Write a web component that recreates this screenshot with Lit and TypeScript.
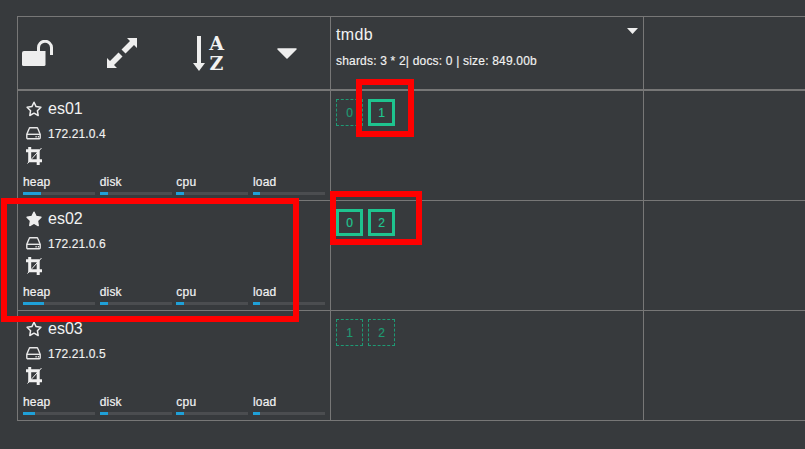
import { LitElement, html, css, svg } from 'lit';
import { customElement } from 'lit/decorators.js';

interface Metric {
  label: string;
  used: number;
}

interface Shard {
  id: number;
  active: boolean;
}

interface NodeInfo {
  name: string;
  ip: string;
  master: boolean;
  metrics: Metric[];
  shards: Shard[];
}

const NODES: NodeInfo[] = [
  {
    name: 'es01', ip: '172.21.0.4', master: false,
    metrics: [{ label: 'heap', used: 25 }, { label: 'disk', used: 11 }, { label: 'cpu', used: 11 }, { label: 'load', used: 10 }],
    shards: [{ id: 0, active: false }, { id: 1, active: true }],
  },
  {
    name: 'es02', ip: '172.21.0.6', master: true,
    metrics: [{ label: 'heap', used: 29 }, { label: 'disk', used: 11 }, { label: 'cpu', used: 11 }, { label: 'load', used: 10 }],
    shards: [{ id: 0, active: true }, { id: 2, active: true }],
  },
  {
    name: 'es03', ip: '172.21.0.5', master: false,
    metrics: [{ label: 'heap', used: 17 }, { label: 'disk', used: 11 }, { label: 'cpu', used: 11 }, { label: 'load', used: 10 }],
    shards: [{ id: 1, active: false }, { id: 2, active: false }],
  },
];

const STAR = 'M8 1.2l2.1 4.4 4.8.7-3.5 3.4.8 4.8L8 12.2l-4.2 2.3.8-4.8L1.1 6.3l4.8-.7z';

const lockIcon = svg`<svg class="ico" width="32" height="26" viewBox="0 0 32 26">
  <path fill="#eee" d="M0 13a2 2 0 0 1 2-2h21.500v13.500a1.500 1.500 0 0 1-1.500 1.500H1.500A1.500 1.500 0 0 1 0 24.500z"/>
  <path fill="none" stroke="#eee" stroke-width="3" d="M16.500 11V8a6.500 6.500 0 0 1 13-.5V15"/>
</svg>`;

const expandIcon = svg`<svg class="ico" width="30" height="30" viewBox="0 0 30 30" fill="#eee">
  <path d="M20 0h10v10l-3-3-8.500 8.500-4-4L23 3z"/>
  <path d="M10 30H0V20l3 3 8.500-8.500 4 4L7 27z"/>
</svg>`;

const caretIcon = svg`<svg class="ico" width="20" height="11" viewBox="0 0 20 11">
  <path fill="#eee" stroke="#eee" stroke-linejoin="round" stroke-width="1.500" d="M1 1h18l-9 9z"/>
</svg>`;

const smallCaret = svg`<svg class="ico" width="11" height="6" viewBox="0 0 11 6">
  <path fill="#eee" d="M0 0h11L5.500 6z"/>
</svg>`;

const diskIcon = svg`<svg class="ico" width="15" height="13" viewBox="0 0 15 13" fill="none" stroke="#e8e8e8" stroke-width="1.400">
  <path d="M.8 7.300 3.200 1.500a1 1 0 0 1 .9-.7h6.800a1 1 0 0 1 .9.7l2.400 5.800v3.500a1 1 0 0 1-1 1H1.800a1 1 0 0 1-1-1z"/>
  <path d="M1 7.300h13"/>
  <path stroke-width="1.500" d="M9.500 9.700h1.200M11.800 9.700H13"/>
</svg>`;

const cropIcon = svg`<svg class="ico" width="16" height="18" viewBox="0 0 16 18" fill="none" stroke="#f0f0f0" stroke-width="3">
  <path d="M3.700 0v13.700H16"/>
  <path d="M0 3.800h12.200V18"/>
  <path stroke-width="1" d="M1.500 16.500 15.500 1"/>
</svg>`;

@customElement('app-root')
export class AppRoot extends LitElement {
  static styles = css`
    :host {
      display: block;
      width: 805px;
      height: 449px;
      position: relative;
      overflow: hidden;
      background: #373a3d;
      color: #f2f2f2;
      font-family: 'Liberation Sans', Arial, sans-serif;
    }

    .cluster {
      display: grid;
      grid-template-columns: 313px 313px 200px;
      grid-template-rows: 74px repeat(3, 110px);
      margin: 16px 0 0 17px;
      border-top: 1px solid #777;
      border-left: 1px solid #777;
      width: 826px;
    }

    .cell {
      border-right: 1px solid #777;
      border-bottom: 1px solid #777;
      box-sizing: border-box;
      min-width: 0;
    }

    .head {
      border-bottom-width: 2px;
    }

    .tools {
      display: flex;
      align-items: center;
      gap: 53px;
      padding-left: 4px;
    }

    .ico {
      display: block;
      flex: none;
    }

    .sort {
      display: flex;
      align-items: center;
      gap: 4px;
      height: 36px;
      margin-left: 3px;
    }

    .sort-letters {
      display: flex;
      flex-direction: column;
      font-family: 'DejaVu Serif', serif;
      font-weight: bold;
      font-size: 19px;
      line-height: 20px;
      text-align: center;
      width: 15px;
    }

    .index {
      position: relative;
      padding: 9px 5px 0;
    }

    .index-name {
      font-size: 16px;
      line-height: 18px;
      letter-spacing: 0.4px;
    }

    .index-stats {
      margin-top: 10px;
      font-size: 12px;
      line-height: 14px;
      letter-spacing: 0.19px;
      -webkit-text-stroke: 0.15px;
    }

    .index-menu {
      position: absolute;
      top: 11px;
      right: 5px;
    }

    .node {
      display: flex;
      flex-direction: column;
      padding: 9px 5px 0;
    }

    .line {
      display: flex;
      align-items: center;
      gap: 6px;
      padding-left: 3px;
    }

    .name-line {
      height: 18px;
      font-size: 16px;
    }

    .ip-line {
      height: 14px;
      margin-top: 8px;
      gap: 7px;
      font-size: 12px;
      letter-spacing: 0.1px;
      -webkit-text-stroke: 0.15px;
    }

    .ip-line span {
      margin-top: 2px;
    }

    .crop-line {
      height: 18px;
      margin-top: 7px;
    }

    .metrics {
      display: grid;
      grid-template-columns: repeat(4, 72px);
      column-gap: 4.670px;
      margin-top: 10px;
    }

    .metric-label {
      font-size: 12px;
      line-height: 14px;
      letter-spacing: 0.2px;
      -webkit-text-stroke: 0.2px;
    }

    .bar {
      height: 3px;
      margin-top: 3px;
      background: #4b4d50;
    }

    .bar-fill {
      height: 100%;
      background: #1fa0d8;
    }

    .shards {
      display: flex;
      gap: 5px;
      padding: 8px 5px 0;
    }

    .shard {
      width: 27px;
      height: 27px;
      box-sizing: border-box;
      display: flex;
      align-items: center;
      justify-content: center;
      font-size: 12px;
      color: #1f9a72;
      border: 1px dashed #1e9a74;
      -webkit-text-stroke: 0.2px;
    }

    .shard.active {
      border: 3px solid #1ec48f;
      color: #20c791;
    }

    .mark {
      position: absolute;
      box-sizing: border-box;
      border: 6px solid #ff0000;
    }

    .mark-shard-1 { left: 356px; top: 79px; width: 58px; height: 58px; }
    .mark-shard-2 { left: 330px; top: 191px; width: 92px; height: 54px; }
    .mark-node { left: 1px; top: 198px; width: 298px; height: 124px; }
  `;

  renderNode(node: NodeInfo) {
    return html`
      <div class="cell node">
        <div class="line name-line">
          <svg class="ico" width="16" height="16" viewBox="0 0 16 16">
            <path d=${STAR} fill=${node.master ? '#eee' : 'none'} stroke="#eee" stroke-width="1.500" stroke-linejoin="round"></path>
          </svg>
          <span>${node.name}</span>
        </div>
        <div class="line ip-line">${diskIcon}<span>${node.ip}</span></div>
        <div class="line crop-line">${cropIcon}</div>
        <div class="metrics">
          ${node.metrics.map(m => html`
            <div>
              <div class="metric-label">${m.label}</div>
              <div class="bar"><div class="bar-fill" style="width:${m.used}%"></div></div>
            </div>
          `)}
        </div>
      </div>
      <div class="cell shards">
        ${node.shards.map(s => html`<div class="shard ${s.active ? 'active' : ''}">${s.id}</div>`)}
      </div>
      <div class="cell"></div>
    `;
  }

  render() {
    return html`
      <div class="cluster">
        <div class="cell head tools">
          ${lockIcon}
          ${expandIcon}
          <div class="sort">
            <svg class="ico" width="12" height="35" viewBox="0 0 12 35">
              <path fill="#eee" d="M4 0h4v27h4l-6 8-6-8h4z"></path>
            </svg>
            <div class="sort-letters"><span>A</span><span>Z</span></div>
          </div>
          ${caretIcon}
        </div>
        <div class="cell head index">
          <div class="index-name">tmdb</div>
          <div class="index-stats">shards: 3 * 2| docs: 0 | size: 849.00b</div>
          <div class="index-menu">${smallCaret}</div>
        </div>
        <div class="cell head"></div>
        ${NODES.map(n => this.renderNode(n))}
      </div>
      <div class="mark mark-shard-1"></div>
      <div class="mark mark-shard-2"></div>
      <div class="mark mark-node"></div>
    `;
  }
}
